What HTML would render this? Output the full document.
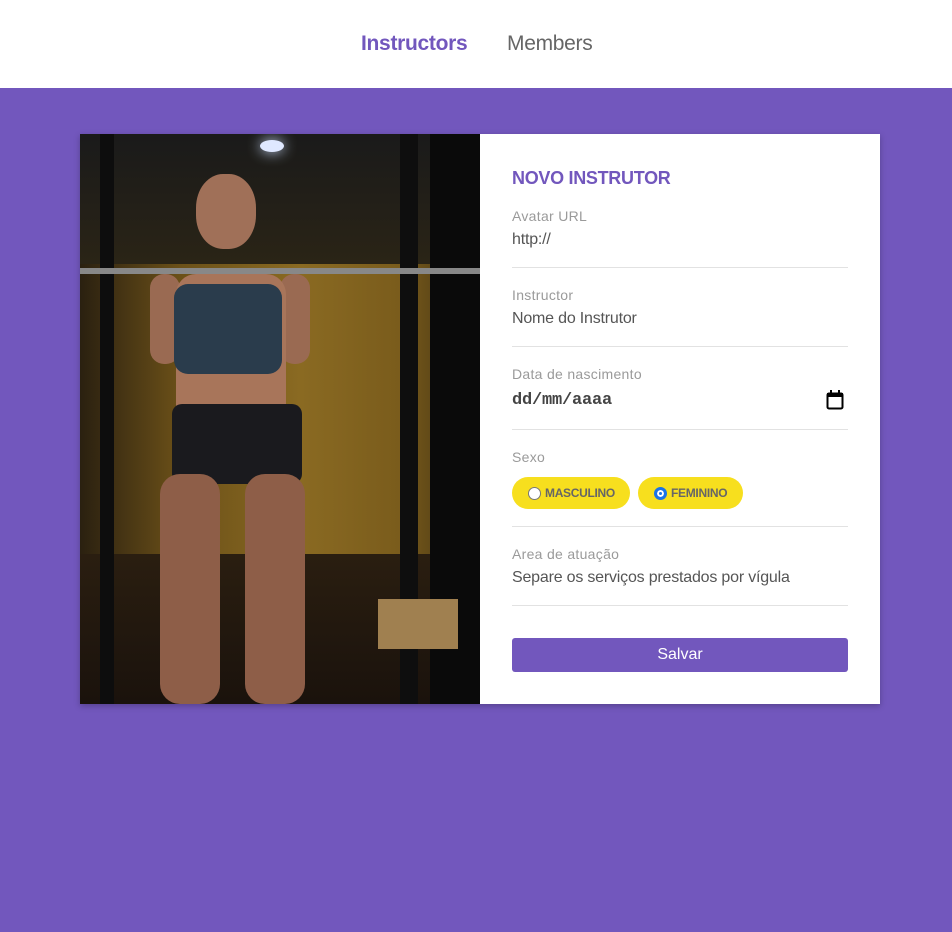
<!DOCTYPE html>
<html><head><meta charset="utf-8"><style>
*{margin:0;padding:0;box-sizing:border-box}
body{width:952px;height:932px;background:#7257bd;font-family:"Liberation Sans",sans-serif;overflow:hidden}
header{height:88px;background:#fff;position:relative}
header a{position:absolute;top:32px;font-size:21px;text-decoration:none;letter-spacing:-.3px}
.card{position:absolute;left:80px;top:134px;width:800px;height:570px;background:#fff;box-shadow:0 2px 6px rgba(0,0,0,.25);display:flex}
.img{width:400px;height:570px;position:relative;overflow:hidden;background:#141414}
.form{position:absolute;left:432px;top:0;width:336px}
h3{position:absolute;top:34px;color:#7257bd;font-size:18px;font-weight:bold;letter-spacing:-.3px}
.f{position:absolute;left:0;width:336px;border-bottom:1px solid #e2e2e2}
.lab{font-size:14px;color:#9a9a9a;letter-spacing:.3px}
.val{font-size:16px;color:#555;margin-top:7px;letter-spacing:-.2px}
.pill{position:absolute;top:0;height:32px;border-radius:16px;background:#f7df1e;font-size:12px;font-weight:bold;color:#666;display:flex;align-items:center;padding-left:16px;letter-spacing:-.3px}
.pill i{width:13px;height:13px;border-radius:50%;border:1px solid #777;background:#fff;margin-right:4px;display:inline-block}
.btn{position:absolute;top:504px;left:0;width:336px;height:34px;background:#7257bd;color:#fff;border-radius:3px;text-align:center;line-height:34px;font-size:16px}
</style></head><body>
<header><a style="left:361px;color:#7257bd;font-weight:bold">Instructors</a><a style="left:507px;color:#666">Members</a></header>
<div class="card">
<div class="img">
<div style="position:absolute;left:0;top:120px;width:400px;height:300px;background:linear-gradient(90deg,#2a2010 0%,#6b5018 25%,#8a6a22 55%,#7a5c1c 80%,#3a2c10 100%)"></div>
<div style="position:absolute;left:0;top:0;width:400px;height:130px;background:linear-gradient(#1a1a1a,#2a2416)"></div>
<div style="position:absolute;left:0;top:420px;width:400px;height:150px;background:linear-gradient(#2a1e10,#1a120c)"></div>
<div style="position:absolute;left:20px;top:0;width:14px;height:570px;background:#0d0d0d"></div>
<div style="position:absolute;left:320px;top:0;width:18px;height:570px;background:#0e0e0e"></div>
<div style="position:absolute;left:350px;top:0;width:50px;height:570px;background:#0a0a0a"></div>
<div style="position:absolute;left:0;top:134px;width:400px;height:6px;background:#888"></div>
<div style="position:absolute;left:180px;top:6px;width:24px;height:12px;border-radius:50%;background:#dfe8ff;box-shadow:0 0 14px #cfe0ff"></div>
<div style="position:absolute;left:116px;top:40px;width:60px;height:75px;border-radius:45%;background:#a07058"></div>
<div style="position:absolute;left:70px;top:140px;width:30px;height:90px;border-radius:14px;background:#9a6a52"></div>
<div style="position:absolute;left:200px;top:140px;width:30px;height:90px;border-radius:14px;background:#9a6a52"></div>
<div style="position:absolute;left:96px;top:140px;width:110px;height:160px;border-radius:20px;background:#a8755a"></div>
<div style="position:absolute;left:94px;top:150px;width:108px;height:90px;border-radius:14px;background:#2a3c4c"></div>
<div style="position:absolute;left:92px;top:270px;width:130px;height:80px;border-radius:10px;background:#1a1a1e"></div>
<div style="position:absolute;left:80px;top:340px;width:60px;height:230px;border-radius:20px;background:#8e5e48"></div>
<div style="position:absolute;left:165px;top:340px;width:60px;height:230px;border-radius:20px;background:#8e5e48"></div>
<div style="position:absolute;left:298px;top:465px;width:80px;height:50px;background:#a08050"></div>
</div>
<div class="form">
<h3>NOVO INSTRUTOR</h3>
<div class="f" style="top:74px;height:60px"><div class="lab">Avatar URL</div><div class="val">http://</div></div>
<div class="f" style="top:153px;height:60px"><div class="lab">Instructor</div><div class="val">Nome do Instrutor</div></div>
<div class="f" style="top:232px;height:64px"><div class="lab">Data de nascimento</div><div class="val" style="font-family:'Liberation Mono',monospace;font-weight:bold;font-size:17px;color:#444;margin-top:9px">dd/mm/aaaa</div>
<svg style="position:absolute;right:4px;top:24px" width="18" height="20" viewBox="0 0 18 20"><rect x="1.5" y="3.5" width="15" height="15" rx="1.5" fill="none" stroke="#000" stroke-width="2"/><rect x="1" y="3" width="16" height="4" fill="#000"/><rect x="4" y="0" width="2" height="4" fill="#000"/><rect x="12" y="0" width="2" height="4" fill="#000"/></svg></div>
<div class="f" style="top:315px;height:78px"><div class="lab">Sexo</div>
<div style="position:relative;margin-top:12px">
<div class="pill" style="left:0;width:118px"><i></i>MASCULINO</div>
<div class="pill" style="left:126px;width:105px"><i style="border:3px solid #1a73e8;background:#1a73e8;box-shadow:inset 0 0 0 2px #fff"></i>FEMININO</div></div></div>
<div class="f" style="top:412px;height:60px"><div class="lab">Area de atuação</div><div class="val">Separe os serviços prestados por vígula</div></div>
<div class="btn">Salvar</div>
</div>
</div>
</body></html>
